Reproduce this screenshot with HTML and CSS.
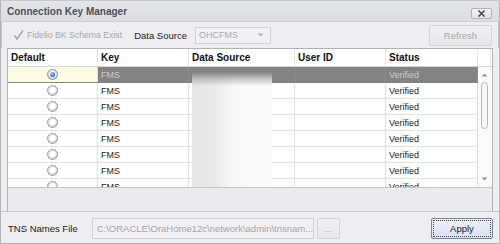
FILE: index.html
```html
<!DOCTYPE html>
<html lang="en">
<head>
    <meta charset="UTF-8">
    <title>Connection Key Manager</title>
    <link rel="stylesheet" href="styles.css">
</head>
<body>
<div class="window">
    <div class="titlebar">
        <span class="title">Connection Key Manager</span>
        <span class="close-btn">
            <svg width="9" height="7" viewBox="0 0 9 7"><path d="M1.5 0.5 L7.5 6.5 M7.5 0.5 L1.5 6.5" stroke="#4d4d4d" stroke-width="1.6"/></svg>
        </span>
    </div>

    <div class="toolbar">
        <label class="check disabled">
            <span class="check-box">
                <svg width="13" height="13" viewBox="0 0 13 13"><path d="M2.5 6.5 L5 10 L11 1.5" fill="none" stroke="#a6a6a6" stroke-width="1.4"/></svg>
            </span>
            Fidelio BK Schema Exist
        </label>
        <span class="field-label">Data Source</span>
        <div class="combo">
            <span>OHCFMS</span>
            <svg width="7" height="4" viewBox="0 0 7 4"><path d="M0.5 0.5 L6.5 0.5 L3.5 3.5 Z" fill="#b4b4b4"/></svg>
        </div>
        <button class="btn refresh" disabled>Refresh</button>
    </div>

    <div class="panel">
        <div class="grid">
            <div class="grid-head">
                <div class="cell">Default</div>
                <div class="cell">Key</div>
                <div class="cell">Data Source</div>
                <div class="cell">User ID</div>
                <div class="cell">Status</div>
                <div class="cell"></div>
            </div>
            <div class="grid-body">
                <div class="rows" id="rows"></div>
                <div class="scrollbar">
                    <svg class="arrow-up" width="7" height="4" viewBox="0 0 7 4"><path d="M0.5 3.5 L6.5 3.5 L3.5 0.5 Z" fill="#9a9a9a"/></svg>
                    <div class="thumb"></div>
                    <svg class="arrow-down" width="7" height="4" viewBox="0 0 7 4"><path d="M0.5 0.5 L6.5 0.5 L3.5 3.5 Z" fill="#9a9a9a"/></svg>
                </div>
            </div>
            <!-- blurred data source values -->
            <div class="blur"></div>
        </div>
    </div>

    <div class="footer">
        <span class="field-label">TNS Names File</span>
        <div class="textbox">C:\ORACLE\OraHome12c\network\admin\tnsnam...</div>
        <button class="btn browse" disabled>...</button>
        <button class="btn apply">Apply</button>
    </div>
</div>

<script>
var rows = document.getElementById('rows');
for (var i = 0; i < 8; i++) {
    var row = document.createElement('div');
    row.className = 'row' + (i === 0 ? ' selected' : '');
    row.innerHTML =
        '<div class="cell radio-cell"><span class="radio' + (i === 0 ? ' on' : '') + '"></span></div>' +
        '<div class="cell">FMS</div>' +
        '<div class="cell">OHCFMS</div>' +
        '<div class="cell"></div>' +
        '<div class="cell">Verified</div>';
    rows.appendChild(row);
}
</script>
</body>
</html>
```

FILE: styles.css
```css
body {
    margin: 0;
    background: #f0f0f0;
    font-family: "Liberation Sans", Arial, sans-serif;
    font-size: 9.5px;
    color: #1b1b1b;
}
.window {
    width: 500px;
    height: 244px;
    box-sizing: border-box;
    border: 1px solid #b4b4b8;
    border-top-color: #c8c8cc;
    background: #eeeef0;
    display: flex;
    flex-direction: column;
}
.titlebar {
    height: 20px;
    flex-shrink: 0;
    display: flex;
    align-items: center;
    justify-content: space-between;
    padding: 0 7px 0 6px;
    background: linear-gradient(#e4e5e8, #dcdde1);
    border-bottom: 1px solid #cfd0d4;
}
.title {
    font-weight: bold;
    font-size: 10px;
    color: #4a5260;
}
.close-btn {
    width: 19px;
    height: 9px;
    border: 1px solid #b2b3b7;
    border-radius: 2px;
    background: linear-gradient(#f3f3f5, #e2e3e6);
    display: flex;
    align-items: center;
    justify-content: center;
    margin-top: 5px;
}
.toolbar {
    height: 26px;
    flex-shrink: 0;
    display: flex;
    align-items: center;
    padding: 0 6px 0 10px;
    border-left: 1px solid #c2c2c6;
    border-right: 1px solid #c2c2c6;
}
.check {
    display: flex;
    align-items: center;
    gap: 2px;
    color: #a8a8a8;
    font-size: 8.7px;
    margin-right: 12px;
}
.check-box {
    width: 13px;
    height: 13px;
    display: flex;
}
.field-label {
    color: #1b1b1b;
}
.combo {
    width: 76px;
    height: 17px;
    box-sizing: border-box;
    margin-left: 8px;
    border: 1px solid #d3d3d6;
    background: #f1f1f3;
    display: flex;
    align-items: center;
    justify-content: space-between;
    padding: 0 6px 0 3px;
    color: #ababab;
    font-size: 9px;
}
.btn {
    font-family: inherit;
    font-size: 9.5px;
    box-sizing: border-box;
    border: 1px solid #d5d5d8;
    border-radius: 2px;
    background: linear-gradient(#f0f0f2, #e8e8ea);
    color: #a9a9a9;
    padding: 0;
}
.refresh {
    margin-left: auto;
    width: 63px;
    height: 21px;
}
.panel {
    height: 164px;
    flex-shrink: 0;
    box-sizing: border-box;
    margin: 0 6px;
    border: 1px solid #b2b2b6;
    background: #ebebee;
}
.grid {
    position: relative;
    height: 138px;
    background: #fff;
    border-bottom: 1px solid #c6c6c9;
    overflow: hidden;
}
.grid-head,
.row {
    display: grid;
    grid-template-columns: 90px 91px 106px 91px 92px;
}
.grid-head {
    grid-template-columns: 90px 91px 106px 91px 92px 13px;
    height: 18px;
    box-sizing: border-box;
    border-bottom: 1px solid #d6d6d6;
    font-weight: bold;
    font-size: 10px;
    color: #111;
}
.cell {
    box-sizing: border-box;
    border-right: 1px solid #e2e0da;
    padding-left: 3px;
    display: flex;
    align-items: center;
    white-space: nowrap;
    overflow: hidden;
}
.grid-head .cell {
    border-right-color: #e4e4e4;
}
.grid-body {
    display: flex;
}
.rows {
    width: 470px;
}
.row {
    height: 16px;
    box-sizing: border-box;
    border-bottom: 1px solid #e2e0da;
    font-size: 9px;
}
.row.selected {
    background: #838383;
    color: #cdcdcd;
    border-bottom-color: #838383;
}
.row.selected .cell {
    border-right-color: #8d8d8d;
}
.row.selected .radio-cell {
    background: #fffce6;
    border-right-color: #e2e0da;
}
.radio-cell {
    justify-content: center;
    padding-left: 0;
}
.radio {
    width: 11px;
    height: 11px;
    box-sizing: border-box;
    border-radius: 50%;
    border: 1px solid #9e9e9e;
    background: radial-gradient(circle at 50% 45%, #ffffff 0, #ffffff 38%, #d6d6d6 62%, #b9b9b9 100%);
    position: relative;
}
.radio.on {
    border-color: #8a96b4;
}
.radio.on::after {
    content: "";
    position: absolute;
    left: 2px;
    top: 2px;
    width: 5px;
    height: 5px;
    border-radius: 50%;
    background: radial-gradient(circle at 40% 35%, #b8cbff, #3a62d6 70%, #2a4cb8);
}
.scrollbar {
    width: 13px;
    height: 120px;
    position: relative;
    background: #fbfbfb;
}
.arrow-up {
    position: absolute;
    left: 3px;
    top: 6px;
}
.thumb {
    position: absolute;
    left: 3px;
    top: 15px;
    width: 7px;
    height: 47px;
    box-sizing: border-box;
    border: 1px solid #b7b7b7;
    border-radius: 4px;
    background: #f7f7f7;
}
.arrow-down {
    position: absolute;
    left: 3px;
    top: 110px;
}
.blur {
    position: absolute;
    left: 184px;
    top: 23px;
    width: 80px;
    height: 116px;
    background:
        linear-gradient(rgba(125,125,125,0.95) 0, rgba(150,150,150,0.6) 6px, rgba(255,255,255,0) 14px),
        linear-gradient(to right, #e6e6e6 0, #e9e9e9 22px, #f9f9f9 42px, #fbfbfb 100%);
}
.footer {
    flex: 1;
    display: flex;
    align-items: center;
    padding: 2px 6px 0 7px;
    border-top: 1px solid #c9c9cc;
    margin-top: -1px;
}
.textbox {
    width: 222px;
    height: 21px;
    box-sizing: border-box;
    margin-left: 14px;
    border: 1px solid #d3d3d6;
    background: #f1f1f3;
    color: #a6a6a6;
    padding-left: 4px;
    display: flex;
    align-items: center;
    white-space: nowrap;
    overflow: hidden;
}
.browse {
    width: 23px;
    height: 21px;
    margin-left: 3px;
}
.apply {
    margin-left: auto;
    width: 62px;
    height: 21px;
    color: #1b1b1b;
    border: 1px solid #7a86a8;
    background: linear-gradient(#eef1fb, #d9e0f6);
    outline: 1px dotted #4a4a4a;
    outline-offset: -3px;
}
```
